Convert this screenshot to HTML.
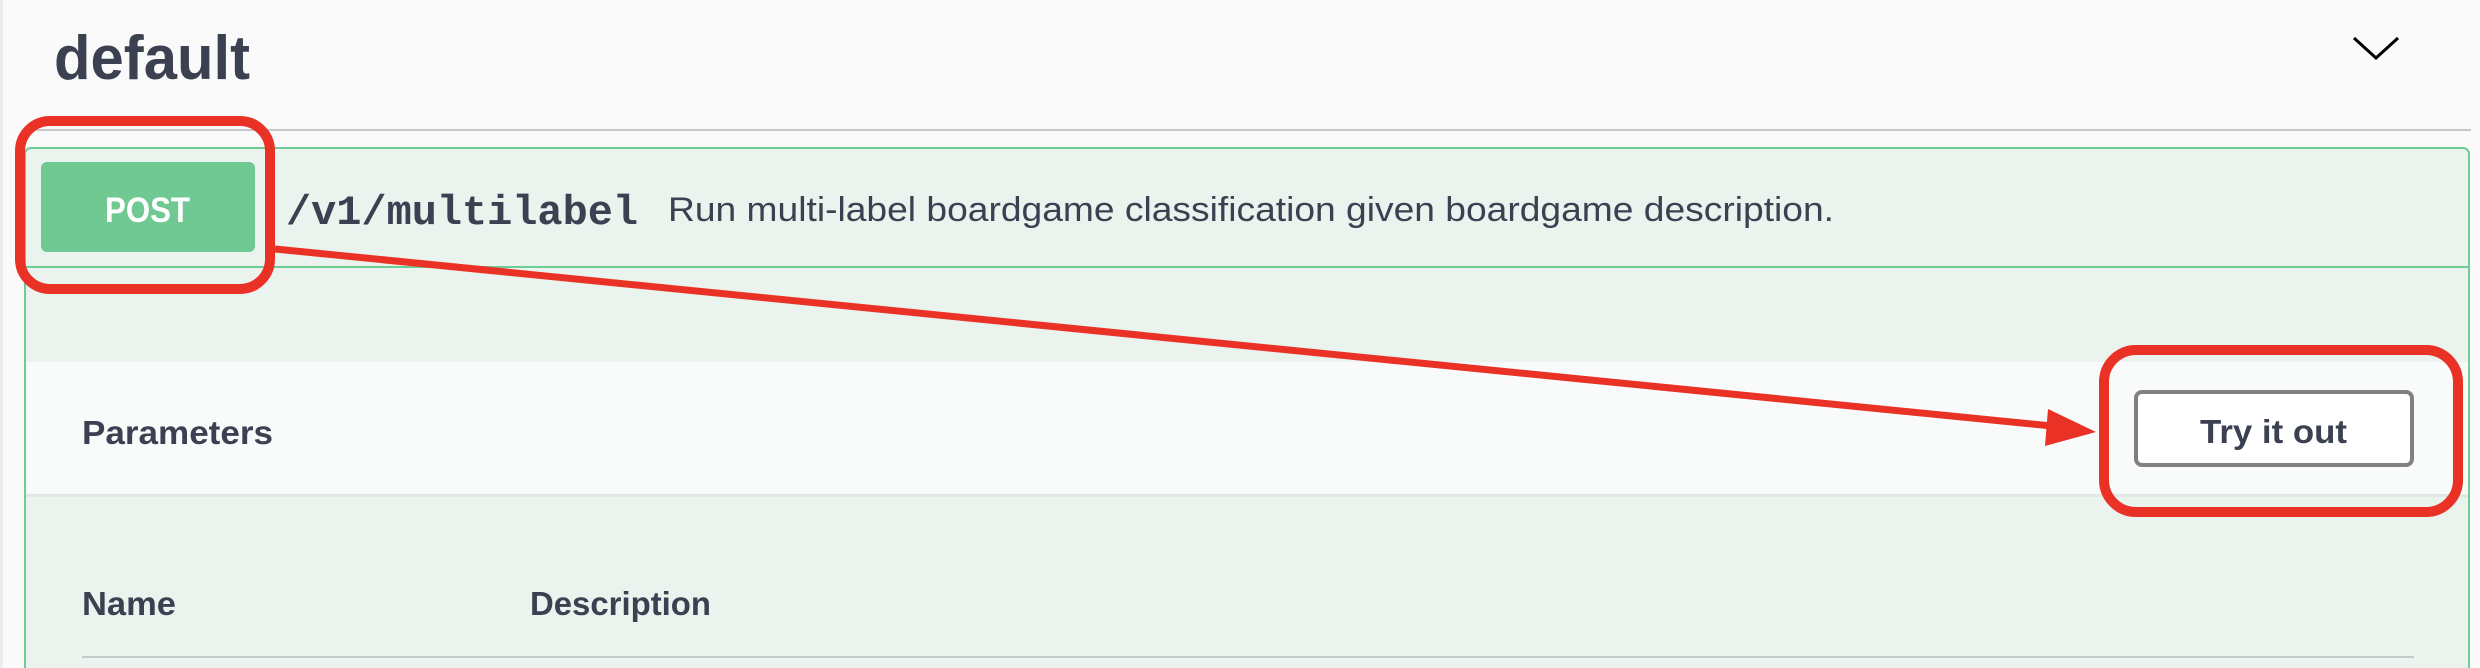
<!DOCTYPE html>
<html><head><meta charset="utf-8"><style>html,body{margin:0;padding:0;background:#fafafa}svg{display:block}</style></head><body>
<svg width="2480" height="668" viewBox="0 0 2480 668" xmlns="http://www.w3.org/2000/svg">
<rect x="0" y="0" width="2480" height="668" fill="#fafafa"/>
<rect x="0" y="0" width="3" height="668" fill="#ececec"/>
<text x="54" y="79" font-family="Liberation Sans, sans-serif" font-weight="bold" font-size="62" fill="#3b4151" textLength="196" lengthAdjust="spacingAndGlyphs">default</text>
<path d="M2354 38 L2376 58 L2398 38" fill="none" stroke="#000" stroke-width="3"/>
<rect x="24" y="129" width="2447" height="2" fill="#c8c8c8"/>
<rect x="25" y="148" width="2444" height="530" rx="6" fill="#ebf3ee" stroke="#6fcc95" stroke-width="2"/>
<rect x="26" y="266" width="2442" height="2" fill="#6fcc95"/>
<rect x="41" y="162" width="214" height="90" rx="6" fill="#70c993"/>
<text x="105" y="222" font-family="Liberation Sans, sans-serif" font-weight="bold" font-size="35" fill="#fff" textLength="85" lengthAdjust="spacingAndGlyphs">POST</text>
<text x="286" y="224" font-family="Liberation Mono, monospace" font-weight="bold" font-size="42" fill="#3b4151" textLength="352" lengthAdjust="spacingAndGlyphs">/v1/multilabel</text>
<text x="668" y="221" font-family="Liberation Sans, sans-serif" font-size="34" fill="#3b4151" textLength="1166" lengthAdjust="spacingAndGlyphs">Run multi-label boardgame classification given boardgame description.</text>
<rect x="26" y="362" width="2442" height="133" fill="#f9fbfa"/>
<rect x="26" y="494" width="2442" height="3" fill="#e2e7e4"/>
<text x="82" y="444" font-family="Liberation Sans, sans-serif" font-weight="bold" font-size="33" fill="#3b4151" textLength="191" lengthAdjust="spacingAndGlyphs">Parameters</text>
<rect x="2136" y="392" width="276" height="73" rx="6" fill="#fff" stroke="#808080" stroke-width="4"/>
<text x="2200" y="443" font-family="Liberation Sans, sans-serif" font-weight="bold" font-size="33" fill="#3b4151" textLength="147" lengthAdjust="spacingAndGlyphs">Try it out</text>
<text x="82" y="615" font-family="Liberation Sans, sans-serif" font-weight="bold" font-size="33" fill="#3b4151" textLength="94" lengthAdjust="spacingAndGlyphs">Name</text>
<text x="530" y="615" font-family="Liberation Sans, sans-serif" font-weight="bold" font-size="33" fill="#3b4151" textLength="181" lengthAdjust="spacingAndGlyphs">Description</text>
<rect x="82" y="656" width="2332" height="2" fill="#c8cac9"/>
<rect x="20" y="121" width="250" height="168" rx="30" fill="none" stroke="#e93125" stroke-width="10"/>
<rect x="2104" y="350" width="354" height="162" rx="32" fill="none" stroke="#e93125" stroke-width="10"/>
<line x1="275" y1="249" x2="2052" y2="426" stroke="#e93125" stroke-width="7"/>
<polygon points="2096,432 2048,409 2045,446" fill="#e93125"/>
</svg>
</body></html>
